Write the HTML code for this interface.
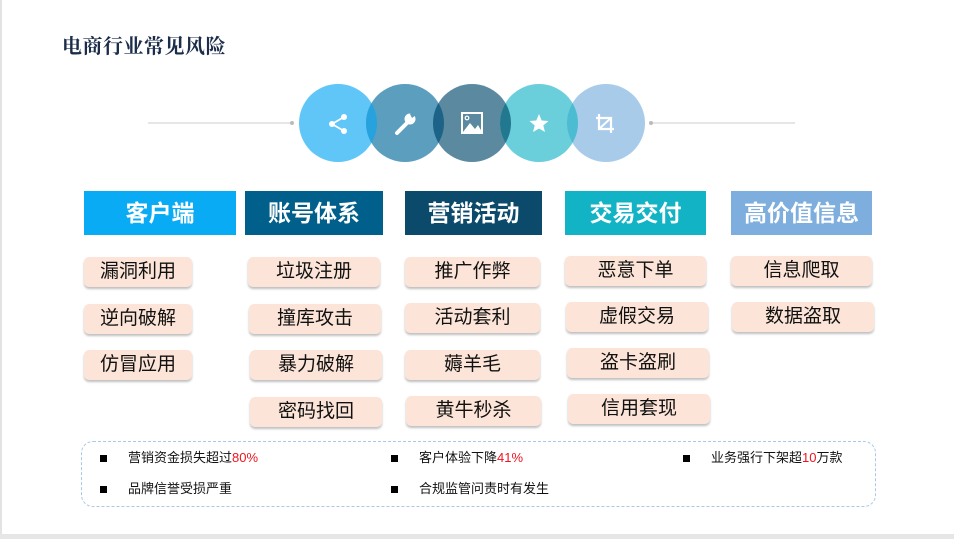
<!DOCTYPE html>
<html><head><meta charset="utf-8"><style>
body{margin:0;width:954px;height:539px;background:#fff;position:relative;overflow:hidden;font-family:"Liberation Sans","Noto Sans CJK SC",sans-serif;}
.lb{position:absolute;left:0;top:0;width:2px;height:539px;background:#e3e3e3}
.bb{position:absolute;left:0;top:534px;width:954px;height:5px;background:#e6e6e6}
.title{position:absolute;left:62px;top:30px;font:bold 20px "Noto Serif CJK SC",serif;color:#1b2d4a;letter-spacing:0.5px}
.h{position:absolute;top:191px;height:44px;color:#fff;font-weight:bold;font-size:23px;line-height:44px;text-align:center}
.p{position:absolute;height:30px;line-height:30px;background:#fce5d8;border-radius:5px;box-shadow:0 2px 2px rgba(0,0,0,.25);text-align:center;font-size:19px;color:#111}
.box{position:absolute;left:81px;top:441px;width:793px;height:64px;border:1.5px dashed #a9c9e8;border-radius:12px}
.t{position:absolute;font-size:13px;color:#111;line-height:16px}
.sq{position:absolute;width:7px;height:7px;background:#000}
.r{color:#f0141e}
</style></head><body>
<div class="lb"></div><div class="bb"></div>
<div class="title">电商行业常见风险</div>
<svg style="position:absolute;left:0;top:0" width="954" height="200">
<line x1="148" y1="123" x2="292" y2="123" stroke="#ddd" stroke-width="1.5"/><circle cx="292" cy="123" r="2" fill="#bbb"/>
<line x1="651" y1="123" x2="795" y2="123" stroke="#ddd" stroke-width="1.5"/><circle cx="651" cy="123" r="2" fill="#bbb"/>
<defs>
<clipPath id="c1"><circle cx="338" cy="123" r="39"/></clipPath>
<clipPath id="c2"><circle cx="405" cy="123" r="39"/></clipPath>
<clipPath id="c3"><circle cx="472" cy="123" r="39"/></clipPath>
<clipPath id="c4"><circle cx="539" cy="123" r="39"/></clipPath>
</defs>
<circle cx="338" cy="123" r="39" fill="#5fc6f7"/>
<circle cx="405" cy="123" r="39" fill="#5b9ebd"/>
<circle cx="472" cy="123" r="39" fill="#5b8aa0"/>
<circle cx="539" cy="123" r="39" fill="#6acfdb"/>
<circle cx="606" cy="123" r="39" fill="#a9cbea"/>
<circle cx="405" cy="123" r="39" fill="#26a3de" clip-path="url(#c1)"/>
<circle cx="472" cy="123" r="39" fill="#1d6387" clip-path="url(#c2)"/>
<circle cx="539" cy="123" r="39" fill="#22788f" clip-path="url(#c3)"/>
<circle cx="606" cy="123" r="39" fill="#4bbcd1" clip-path="url(#c4)"/>
<g fill="#fff" stroke="#fff">
<circle cx="344" cy="117" r="3" stroke="none"/><circle cx="332" cy="124" r="3" stroke="none"/><circle cx="344" cy="131" r="3" stroke="none"/>
<path d="M344 117L332 124L344 131" fill="none" stroke-width="1.8"/>
<path d="M397 133L407 123" stroke-width="4" stroke-linecap="round"/>
<circle cx="410" cy="119" r="5.5" stroke="none"/><path d="M410 114L414 110L416 115L412 118Z" fill="#5b9ebd" stroke="none"/>
<rect x="462" y="113" width="20" height="20" fill="none" stroke-width="2"/>
<circle cx="467" cy="118" r="1.8" fill="none" stroke-width="1.2"/>
<path d="M463 132L470 123L475 129L478 125L482 132Z" stroke="none"/>
<path d="M539 114L541.7 120.5L548.5 121L543.3 125.5L545 132L539 128.5L533 132L534.7 125.5L529.5 121L536.3 120.5Z" stroke="none"/>
<path d="M599 114V129H614M596 118H611V133" fill="none" stroke-width="2.2"/><path d="M599 129L611 118" stroke-width="2"/>
</g>
</svg>
<div class="h" style="left:84px;width:152px;background:#0aabf5">客户端</div>
<div class="h" style="left:245px;width:138px;background:#015f8b">账号体系</div>
<div class="h" style="left:405px;width:137px;background:#0c4a6b">营销活动</div>
<div class="h" style="left:565px;width:141px;background:#12b3c4">交易交付</div>
<div class="h" style="left:731px;width:141px;background:#7daedd">高价值信息</div>

<div class="p" style="left:84px;top:257px;width:108px">漏洞利用</div>
<div class="p" style="left:84px;top:304px;width:108px">逆向破解</div>
<div class="p" style="left:84px;top:350px;width:108px">仿冒应用</div>

<div class="p" style="left:248px;top:257px;width:132px">垃圾注册</div>
<div class="p" style="left:249px;top:304px;width:132px">撞库攻击</div>
<div class="p" style="left:250px;top:350px;width:132px">暴力破解</div>
<div class="p" style="left:250px;top:397px;width:132px">密码找回</div>

<div class="p" style="left:405px;top:257px;width:135px">推广作弊</div>
<div class="p" style="left:405px;top:303px;width:135px">活动套利</div>
<div class="p" style="left:405px;top:350px;width:135px">薅羊毛</div>
<div class="p" style="left:406px;top:396px;width:135px">黄牛秒杀</div>

<div class="p" style="left:565px;top:256px;width:141px">恶意下单</div>
<div class="p" style="left:566px;top:302px;width:142px">虚假交易</div>
<div class="p" style="left:567px;top:348px;width:142px">盗卡盗刷</div>
<div class="p" style="left:568px;top:394px;width:142px">信用套现</div>

<div class="p" style="left:731px;top:256px;width:141px">信息爬取</div>
<div class="p" style="left:732px;top:302px;width:142px">数据盗取</div>

<div class="box"></div>
<div class="sq" style="left:100px;top:455px"></div><div class="t" style="left:128px;top:450px">营销资金损失超过<span class="r">80%</span></div>
<div class="sq" style="left:391px;top:455px"></div><div class="t" style="left:419px;top:450px">客户体验下降<span class="r">41%</span></div>
<div class="sq" style="left:683px;top:455px"></div><div class="t" style="left:711px;top:450px">业务强行下架超<span class="r">10</span>万款</div>
<div class="sq" style="left:100px;top:486px"></div><div class="t" style="left:128px;top:481px">品牌信誉受损严重</div>
<div class="sq" style="left:391px;top:486px"></div><div class="t" style="left:419px;top:481px">合规监管问责时有发生</div>
</body></html>
